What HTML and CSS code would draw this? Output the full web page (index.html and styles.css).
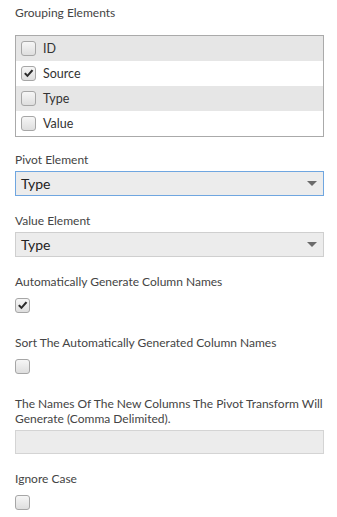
FILE: index.html
```html
<html lang="en">
  <head>
    <meta charset="utf-8">
    <link rel="stylesheet" href="styles.css">
  </head>
  <body>
    <div class="panel">
      <div class="field field-list">
        <div class="field-label">Grouping Elements</div>
        <div class="check-list">
          <div class="check-row shaded"><span class="box"></span><span class="row-text">ID</span></div>
          <div class="check-row"><span class="box checked"><svg viewBox="0 0 14 14"><path d="M2.2 7.4 L4 5.9 L5.8 8 L10.4 2.6 L12.2 4 L5.9 11 Z" /></svg></span><span class="row-text">Source</span></div>
          <div class="check-row shaded"><span class="box"></span><span class="row-text">Type</span></div>
          <div class="check-row"><span class="box"></span><span class="row-text">Value</span></div>
        </div>
      </div>

      <div class="field">
        <div class="field-label">Pivot Element</div>
        <div class="select focused"><span class="select-text">Type</span><span class="arrow"></span></div>
      </div>

      <div class="field">
        <div class="field-label">Value Element</div>
        <div class="select"><span class="select-text">Type</span><span class="arrow"></span></div>
      </div>

      <div class="field">
        <div class="field-label">Automatically Generate Column Names</div>
        <div class="check-control"><span class="box checked"><svg viewBox="0 0 14 14"><path d="M2.2 7.4 L4 5.9 L5.8 8 L10.4 2.6 L12.2 4 L5.9 11 Z" /></svg></span></div>
      </div>

      <div class="field">
        <div class="field-label">Sort The Automatically Generated Column Names</div>
        <div class="check-control"><span class="box"></span></div>
      </div>

      <div class="field">
        <div class="field-label">The Names Of The New Columns The Pivot Transform Will Generate (Comma Delimited).</div>
        <div class="text-input"></div>
      </div>

      <div class="field">
        <div class="field-label">Ignore Case</div>
        <div class="check-control"><span class="box"></span></div>
      </div>
    </div>
  </body>
</html>
```

FILE: styles.css
```css
body {
  margin: 0;
  background-color: #fff;
  color: #444;
  font-family: Lato, "Open Sans", sans-serif;
  font-size: 12px;
}

.panel {
  display: flex;
  flex-direction: column;
  padding: 5px 13px 0 15px;
}

.field {
  display: flex;
  flex-direction: column;
  margin-bottom: 17px;
}

.field-label {
  line-height: 15px;
  margin-bottom: 4px;
}

.field-list {
  margin-bottom: 15px;
}

.field-list .field-label {
  margin-bottom: 15px;
}

.check-list {
  border: 1px solid #aaa;
}

.check-row {
  display: flex;
  align-items: center;
  height: 25px;
  padding-left: 5px;
  background-color: #fff;
}

.check-row.shaded {
  background-color: #e6e6e6;
}

.row-text {
  margin-left: 7px;
  font-size: 12.5px;
  color: #333;
}

.box {
  display: block;
  box-sizing: border-box;
  width: 15px;
  height: 15px;
  border: 1px solid #a6a6a6;
  border-radius: 3px;
  background: linear-gradient(#f6f6f6, #dedede);
}

.box svg {
  display: block;
  width: 13px;
  height: 13px;
}

.box path {
  fill: #2a2a2a;
}

.select {
  display: flex;
  align-items: center;
  box-sizing: border-box;
  height: 25px;
  padding: 0 6px 0 5px;
  border: 1px solid #cfcfcf;
  background-color: #ececec;
}

.select.focused {
  border-color: #6fa6e0;
}

.select-text {
  flex: 1;
  font-size: 14px;
  color: #222;
}

.arrow {
  width: 0;
  height: 0;
  border-left: 5px solid transparent;
  border-right: 5px solid transparent;
  border-top: 5px solid #6b6b6b;
}

.text-input {
  box-sizing: border-box;
  height: 24px;
  border: 1px solid #d4d4d4;
  background-color: #ececec;
}

.check-control {
  display: flex;
  align-items: center;
  height: 25px;
}
```
